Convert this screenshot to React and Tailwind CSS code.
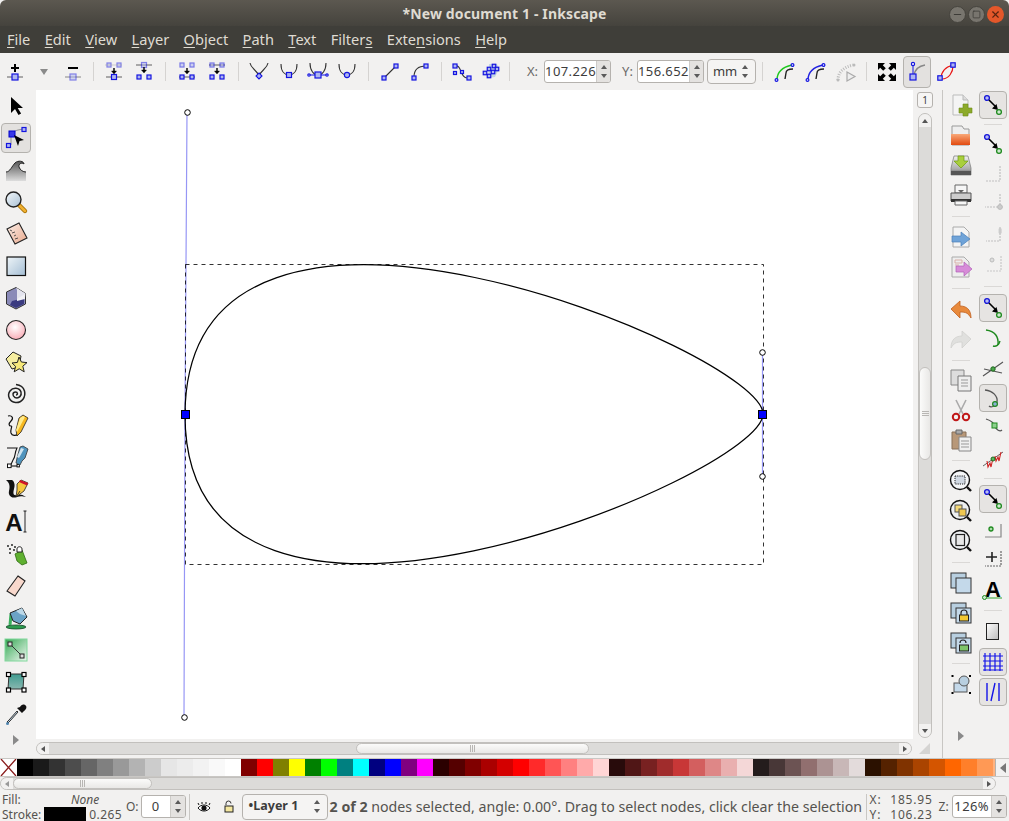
import { Minus, Square, X } from "lucide-react";

const UI_FONT = "font-['Noto_Sans','Open_Sans',sans-serif]";

const palette = [
  "#000000", "#1a1a1a", "#333333", "#4d4d4d", "#666666", "#808080", "#999999", "#b3b3b3", "#cccccc", "#e6e6e6", "#ececec", "#f2f2f2", "#f9f9f9", "#ffffff",
  "#800000", "#ff0000", "#808000", "#ffff00", "#008000", "#00ff00", "#008080", "#00ffff", "#000080", "#0000ff", "#800080", "#ff00ff",
  "#2b0000", "#550000", "#800000", "#aa0000", "#d40000", "#ff0000", "#ff2a2a", "#ff5555", "#ff8080", "#ffaaaa", "#ffd5d5",
  "#280b0b", "#501616", "#782121", "#a02c2c", "#c83737", "#d35f5f", "#de8787", "#e9afaf", "#f4d7d7",
  "#241c1c", "#483737", "#6c5353", "#916f6f", "#ac9393", "#c8b7b7", "#e3dbdb",
  "#2b1100", "#552200", "#803300", "#aa4400", "#d45500", "#ff6600", "#ff7f2a", "#ff9955", "#ffb380",
];

const menus = [
  ["F", "ile"], ["E", "dit"], ["V", "iew"], ["L", "ayer"], ["O", "bject"], ["P", "ath"], ["T", "ext"],
];

function Ico({ children, size = 24 }) {
  return (
    <svg width={size} height={size} viewBox="0 0 24 24" fill="none" className="block overflow-visible">
      {children}
    </svg>
  );
}

function Sq({ x, y, s = 5, o = 1 }) {
  return <rect x={x - s / 2} y={y - s / 2} width={s} height={s} fill="#aeb6f0" stroke="#1414e0" strokeWidth="1.2" opacity={o} />;
}

function Dot({ x, y, r = 2, c = "#1414e0", f = "#fff" }) {
  return <circle cx={x} cy={y} r={r} fill={f} stroke={c} strokeWidth="1.2" />;
}

function Arrow({ x, y }) {
  return (
    <g stroke="#000" strokeWidth="1.4" fill="#000">
      <path d={`M${x} ${y - 3}v3`} />
      <path d={`M${x - 2.5} ${y}h5l-2.5 3z`} strokeWidth="0.4" />
    </g>
  );
}

const topIcons = {
  add: (
    <Ico>
      <path d="M12 4v8M8 8h8" stroke="#000" strokeWidth="2" />
      <path d="M4 17h16" stroke="#777" strokeWidth="1.2" />
      <Sq x={12} y={17} s={6} />
    </Ico>
  ),
  remove: (
    <Ico>
      <path d="M7 8h10" stroke="#000" strokeWidth="2" />
      <path d="M4 17h16" stroke="#999" strokeWidth="1.2" />
      <Sq x={12} y={17} s={6} o={0.5} />
    </Ico>
  ),
  join: (
    <Ico>
      <Sq x={7} y={5} s={4} o={0.5} />
      <Sq x={17} y={5} s={4} o={0.5} />
      <path d="M3 5h17" stroke="#999" strokeWidth="0.8" opacity="0.5" />
      <Arrow x={12} y={11} />
      <path d="M4 17h16" stroke="#777" strokeWidth="1.2" />
      <Sq x={12} y={17} s={5} />
    </Ico>
  ),
  split: (
    <Ico>
      <path d="M4 5h16" stroke="#777" strokeWidth="1.2" />
      <Sq x={12} y={5} s={5} o={0.5} />
      <Arrow x={12} y={10} />
      <Sq x={7} y={17} s={4} />
      <Sq x={17} y={17} s={4} />
    </Ico>
  ),
  joinSeg: (
    <Ico>
      <Sq x={7} y={5} s={4} o={0.55} />
      <Sq x={17} y={5} s={4} o={0.55} />
      <Arrow x={12} y={11} />
      <path d="M4 17h16" stroke="#777" strokeWidth="1.2" />
      <Sq x={7} y={17} s={4} />
      <Sq x={17} y={17} s={4} />
    </Ico>
  ),
  delSeg: (
    <Ico>
      <path d="M4 5h16" stroke="#777" strokeWidth="1.2" />
      <Sq x={7} y={5} s={4} o={0.55} />
      <Sq x={17} y={5} s={4} o={0.55} />
      <Arrow x={12} y={11} />
      <Sq x={7} y={17} s={4} />
      <Sq x={17} y={17} s={4} />
    </Ico>
  ),
  cusp: (
    <Ico>
      <path d="M3 3C4 9 10 10 12 16C14 10 20 9 21 3" stroke="#333" strokeWidth="1.1" />
      <path d="M12 13l3 3l-3 3l-3-3z" fill="#aeb6f0" stroke="#1414e0" strokeWidth="1.1" />
    </Ico>
  ),
  smooth: (
    <Ico>
      <path d="M4 4C4 12 8 15 12 15C16 15 20 12 20 4" stroke="#333" strokeWidth="1.1" />
      <Sq x={12} y={15} s={5} />
    </Ico>
  ),
  symmetric: (
    <Ico>
      <path d="M4 3C4 11 8 15 12 15C16 15 20 11 20 3" stroke="#333" strokeWidth="1.1" />
      <path d="M3 15h18" stroke="#1414e0" strokeWidth="1" />
      <Sq x={12} y={15} s={6} />
      <Dot x={3} y={15} r={1.2} />
      <Dot x={21} y={15} r={1.2} />
    </Ico>
  ),
  auto: (
    <Ico>
      <path d="M4 4C4 12 8 15 12 15C16 15 20 12 20 4" stroke="#333" strokeWidth="1.1" />
      <circle cx="12" cy="15" r="2.6" fill="#aeb6f0" stroke="#1414e0" strokeWidth="1.1" />
    </Ico>
  ),
  toLine: (
    <Ico>
      <path d="M7 17L18 6" stroke="#333" strokeWidth="1.1" />
      <Sq x={6} y={18} s={4} />
      <Sq x={18} y={6} s={4} />
    </Ico>
  ),
  toCurve: (
    <Ico>
      <path d="M6 17C6 10 10 6 18 6" stroke="#333" strokeWidth="1.1" />
      <Sq x={6} y={18} s={4} />
      <Sq x={18} y={6} s={4} />
    </Ico>
  ),
  objToPath: (
    <Ico>
      <path d="M5 6C12 4 10 19 18 18" stroke="#333" strokeWidth="1.1" />
      <Sq x={5} y={6} s={4} />
      <Sq x={5} y={13} s={3} />
      <Sq x={12} y={12} s={3} />
      <Sq x={19} y={18} s={4} />
    </Ico>
  ),
  strokeToPath: (
    <Ico>
      <path d="M10 4h8l2 5l-4 8l-7 1z" fill="#c3d6e3" />
      <Sq x={10} y={9} s={3.5} />
      <Sq x={15} y={6} s={3.5} />
      <Sq x={18} y={9} s={3.5} />
      <Sq x={6} y={13} s={3.5} />
      <Sq x={10} y={16} s={3.5} />
      <Sq x={14} y={12} s={3.5} />
    </Ico>
  ),
  nextHandle: (
    <Ico>
      <path d="M4 20C4 12 10 7 19 5" stroke="#1ec81e" strokeWidth="1.4" />
      <path d="M13 13C13 10 16 9 20 9M13 13l-1 6" stroke="#222" strokeWidth="1.4" />
      <Dot x={3.5} y={20} r={1.4} />
      <Dot x={19.5} y={5} r={1.4} />
    </Ico>
  ),
  prevHandle: (
    <Ico>
      <path d="M4 20C4 12 10 7 19 5" stroke="#2222e0" strokeWidth="1.4" />
      <path d="M13 13C13 10 16 9 20 9M13 13l-1 6" stroke="#222" strokeWidth="1.4" />
      <Dot x={3.5} y={20} r={1.4} />
      <Dot x={19.5} y={5} r={1.4} />
    </Ico>
  ),
  lpe: (
    <Ico>
      <path d="M4 20C4 12 10 7 19 5" stroke="#bbb" strokeWidth="3" strokeDasharray="1 1.5" />
      <path d="M13 12v9l8-4.5z" fill="#eee" stroke="#aaa" strokeWidth="1.2" />
      <circle cx="4" cy="20" r="1.5" fill="#bbb" />
      <circle cx="20" cy="5" r="1.5" fill="#bbb" />
    </Ico>
  ),
  transform: (
    <Ico>
      <path d="M3 3h7l-2.2 2.2l3 3l-2.6 2.6l-3-3L3 10z" fill="#000" />
      <path d="M21 3v7l-2.2-2.2l-3 3l-2.6-2.6l3-3L14 3z" fill="#000" />
      <path d="M3 21v-7l2.2 2.2l3-3l2.6 2.6l-3 3L10 21z" fill="#000" />
      <path d="M21 21h-7l2.2-2.2l-3-3l2.6-2.6l3 3L21 14z" fill="#000" />
    </Ico>
  ),
  showHandles: (
    <Ico>
      <path d="M8 4v12" stroke="#1414e0" strokeWidth="1" />
      <path d="M9 15C10 10 14 6 20 5" stroke="#888" strokeWidth="1.4" />
      <Dot x={8} y={4} r={1.6} />
      <Sq x={8} y={17} s={6} />
    </Ico>
  ),
  outline: (
    <Ico>
      <path d="M6 19C6 12 10 7 18 5" stroke="#e81414" strokeWidth="1.2" />
      <path d="M7 19C14 19 18 12 18 6" stroke="#e81414" strokeWidth="1.2" />
      <Sq x={5} y={18} s={4.4} />
      <Sq x={18} y={5} s={4.4} />
    </Ico>
  ),
};

const leftIcons = {
  select: (
    <Ico>
      <path d="M7 3v16l4-4l3.5 6l2.6-1.5l-3.4-5.5h5.3z" fill="#000" />
    </Ico>
  ),
  node: (
    <Ico>
      <path d="M7 9v10M9 7C12 3 15 4 20 3" stroke="#999" strokeWidth="1.1" />
      <rect x="5" y="5" width="6" height="6" fill="#3838e8" stroke="#0000cc" />
      <Sq x={4.5} y={19.5} s={4} />
      <Sq x={20} y={3.5} s={4} />
      <path d="M10 9l10 5l-4.5 1l-1.5 5z" fill="#000" />
    </Ico>
  ),
  tweak: (
    <Ico>
      <defs>
        <linearGradient id="tw" x1="0" y1="0" x2="0" y2="1">
          <stop offset="0" stopColor="#555" />
          <stop offset="1" stopColor="#ddd" />
        </linearGradient>
      </defs>
      <path d="M2 14C6 14 8 8 11 5C14 2 20 3 20 6C18 4 14 6 15 9C16 12 19 14 22 14V23H2z" fill="url(#tw)" />
      <path d="M2 14C6 14 8 8 11 5C14 2 20 3 20 6C18 4 14 6 15 9C16 12 19 14 22 14" stroke="#222" strokeWidth="1" />
    </Ico>
  ),
  zoom: (
    <Ico>
      <defs>
        <linearGradient id="zm" x1="0" y1="0" x2="1" y2="1">
          <stop offset="0" stopColor="#f3f8fb" />
          <stop offset="1" stopColor="#a9c0d4" />
        </linearGradient>
      </defs>
      <path d="M15 15l6 6" stroke="#a06a00" strokeWidth="4.4" strokeLinecap="round" />
      <path d="M15 15l6 6" stroke="#f0b030" strokeWidth="2.8" strokeLinecap="round" />
      <circle cx="9.5" cy="9.5" r="7.5" fill="url(#zm)" stroke="#222" strokeWidth="1.4" />
    </Ico>
  ),
  measure: (
    <Ico>
      <defs>
        <linearGradient id="ms" x1="0" y1="0" x2="1" y2="1">
          <stop offset="0" stopColor="#fbeee8" />
          <stop offset="1" stopColor="#eaa98c" />
        </linearGradient>
      </defs>
      <path d="M3 7L15 1L23 16L11 22z" fill="url(#ms)" stroke="#222" strokeWidth="1.1" />
      <path d="M6 8l2 1M8 11l3-1M10 14l2-1M11 17l3-1" stroke="#333" strokeWidth="0.8" />
    </Ico>
  ),
  rect: (
    <Ico>
      <defs>
        <linearGradient id="rc" x1="0" y1="0" x2="1" y2="1">
          <stop offset="0" stopColor="#eef4f8" />
          <stop offset="1" stopColor="#a4bed4" />
        </linearGradient>
      </defs>
      <rect x="3" y="3" width="18.5" height="18.5" fill="url(#rc)" stroke="#111" strokeWidth="1.2" />
    </Ico>
  ),
  box: (
    <Ico>
      <path d="M12 1.5L21.5 7.5V18L12 23L2.5 18V6z" fill="#8a8ab8" stroke="#333" strokeWidth="1" />
      <path d="M12 1.5L21.5 7.5L21 12L13 13V4z" fill="#e4e4ee" />
      <path d="M8 15L20 12V18L12 22L6 19z" fill="#3b3b80" />
      <path d="M13 13L21 8V13L13 15z" fill="#f1f1f5" />
    </Ico>
  ),
  circle: (
    <Ico>
      <defs>
        <radialGradient id="cr" cx="0.45" cy="0.35" r="0.7">
          <stop offset="0" stopColor="#fff" />
          <stop offset="1" stopColor="#f9a8b3" />
        </radialGradient>
      </defs>
      <circle cx="12" cy="12" r="9.5" fill="url(#cr)" stroke="#222" strokeWidth="1.1" />
    </Ico>
  ),
  star: (
    <Ico>
      <path d="M2 9L9 2l8 4l-2 11l-7 2z" fill="#f5eda0" stroke="#222" strokeWidth="1" />
      <path d="M15 7l2.4 5l5.6.6l-4.2 3.6l1.4 5.6l-5-3l-5 3l1.4-5.4L8 13l5.4-.6z" fill="#f6e87a" stroke="#222" strokeWidth="1" />
    </Ico>
  ),
  spiral: (
    <Ico>
      <path d="M12 13C14 13 14 10 11.5 10C8.5 10 8 14 11 15.5C15 17 18 13.5 17 10C15.5 5.5 9 5 6 9C3 13 5 20 11.5 20.5C18 21 22 15 20.5 9C19.5 5.5 16.5 3 12 2.5" stroke="#222" strokeWidth="1.5" />
    </Ico>
  ),
  pencil: (
    <Ico>
      <path d="M4 2c4-1 6 2 3 5c-3 3-2 5 0 5c2 0-1 3 0 7c1 3 5 3 7 1" stroke="#111" strokeWidth="1.2" />
      <path d="M15 4l4-3l5 3l-7 14l-4 4l-1-6z" fill="#f7b820" stroke="#222" strokeWidth="0.8" />
      <path d="M16 4l3-2l2 1l-8 15l-1-2z" fill="#ffeb8a" />
    </Ico>
  ),
  pen: (
    <Ico>
      <path d="M3 2h10c-3 6-1 8-4 12c-1 2-2 5-3 6" stroke="#111" strokeWidth="1.1" />
      <path d="M6 20h9" stroke="#111" strokeWidth="1.1" />
      <rect x="3.5" y="18" width="3.6" height="3.6" fill="#fff" stroke="#111" />
      <rect x="13" y="18.5" width="2.4" height="2.4" fill="#fff" stroke="#111" />
      <path d="M16 1l3-1l5 3l-3 9l-3 3l-2 4l-4-2l1-5z" fill="#4f93bd" stroke="#333" strokeWidth="0.8" />
      <path d="M17 2l3 1l-5 9l-2-1z" fill="#cfe3ef" />
    </Ico>
  ),
  calligraphy: (
    <Ico>
      <path d="M2 2c4 3 4 7 3 11c-1 4 2 8 8 6c3-1 5-1 9 0c-4-3-7-3-9-2c-4 1-4-2-3-6c1-3 1-7-2-9z" fill="#111" />
      <path d="M13 6l4-4l7 3l-4 8l-8 6l1-7z" fill="#f6c640" stroke="#222" strokeWidth="0.8" />
      <path d="M16 2l8 3l-1 2.5l-8-3.5z" fill="#d0122a" />
      <path d="M12 19l4-6" stroke="#222" strokeWidth="0.9" />
    </Ico>
  ),
  spray: (
    <Ico>
      <circle cx="4" cy="4" r="0.9" fill="#111" />
      <circle cx="8" cy="3" r="0.9" fill="#111" />
      <circle cx="11" cy="5" r="0.9" fill="#111" />
      <circle cx="6" cy="7" r="0.9" fill="#111" />
      <circle cx="10" cy="8" r="0.9" fill="#111" />
      <circle cx="6" cy="11" r="0.9" fill="#111" />
      <path d="M11 12l7-4l5 13l-5 2l-5-4z" fill="#5fb030" stroke="#2c6a10" strokeWidth="0.8" />
      <path d="M13 7c0-3 5-3 5 0v3h-5z" fill="#fff" stroke="#222" />
    </Ico>
  ),
  eraser: (
    <Ico>
      <path d="M14 2l7 5L11 22l-8-5z" fill="#f8d8cc" stroke="#222" strokeWidth="1.1" />
    </Ico>
  ),
  bucket: (
    <Ico>
      <ellipse cx="12" cy="21" rx="10" ry="2" fill="#2c9c4e" stroke="#14462a" strokeWidth="0.8" />
      <path d="M7 8l-1 11" stroke="#3bb05e" strokeWidth="3" />
      <path d="M6 7l12-5l5 9l-7 7l-7-3z" fill="#6ba3c6" stroke="#222" strokeWidth="1" />
      <path d="M12 5l6-3l4 8l-6-2z" fill="#bcd8e8" />
    </Ico>
  ),
  gradient: (
    <Ico>
      <defs>
        <linearGradient id="gd" x1="0" y1="0" x2="1" y2="1">
          <stop offset="0" stopColor="#35a854" />
          <stop offset="1" stopColor="#eff8f1" />
        </linearGradient>
      </defs>
      <rect x="1" y="1" width="22" height="22" fill="url(#gd)" stroke="#7fd79a" />
      <path d="M6 6l12 12" stroke="#333" strokeWidth="1" />
      <rect x="4" y="4" width="4" height="4" fill="#ddd" stroke="#222" />
      <rect x="16" y="16" width="4" height="4" fill="#ddd" stroke="#222" />
    </Ico>
  ),
  mesh: (
    <Ico>
      <defs>
        <linearGradient id="mh" x1="0" y1="0" x2="0" y2="1">
          <stop offset="0" stopColor="#3f9b8f" />
          <stop offset="1" stopColor="#88b7b0" />
        </linearGradient>
      </defs>
      <path d="M5 4l15 0l-1 15H4z" fill="url(#mh)" stroke="#333" />
      <rect x="2.5" y="2.5" width="4" height="4" fill="#fff" stroke="#000" strokeWidth="1.2" />
      <rect x="18" y="2.5" width="4" height="4" fill="#fff" stroke="#000" strokeWidth="1.2" />
      <rect x="2.5" y="18" width="4" height="4" fill="#fff" stroke="#000" strokeWidth="1.2" />
      <rect x="18" y="18" width="4" height="4" fill="#fff" stroke="#000" strokeWidth="1.2" />
    </Ico>
  ),
  dropper: (
    <Ico>
      <path d="M14 10l-8 9l-2 2l-1-1l2-2l8-9z" fill="#bcd4e6" stroke="#333" />
      <path d="M13 6l5 5l2-2c3-2 3-5 1-6s-4 0-5 2z" fill="#111" />
      <circle cx="3.5" cy="21.5" r="1.5" fill="#4f86b0" />
    </Ico>
  ),
};

const cmdIcons = {
  newDoc: (
    <Ico>
      <path d="M4 2h10l5 5v15H4z" fill="#f4f4f4" stroke="#bbb" />
      <path d="M14 2v5h5" fill="#ddd" stroke="#bbb" />
      <path d="M14 11h5v4h4v5h-4v3h-5v-3h-4v-5h4z" fill="#8caa2a" stroke="#6c8a1a" strokeWidth="0.6" />
    </Ico>
  ),
  open: (
    <Ico>
      <defs>
        <linearGradient id="op" x1="0" y1="0" x2="0" y2="1">
          <stop offset="0" stopColor="#f8a878" />
          <stop offset="1" stopColor="#e24a10" />
        </linearGradient>
      </defs>
      <path d="M3 3h10l2 3h5v16H3z" fill="#eee" stroke="#999" />
      <path d="M2 11h19v11H2z" fill="url(#op)" />
    </Ico>
  ),
  save: (
    <Ico>
      <defs>
        <linearGradient id="sv" x1="0" y1="0" x2="0" y2="1">
          <stop offset="0" stopColor="#f2f2f2" />
          <stop offset="0.7" stopColor="#aaa" />
          <stop offset="1" stopColor="#444" />
        </linearGradient>
      </defs>
      <path d="M5 3h14l3 12v7H2v-7z" fill="url(#sv)" stroke="#777" strokeWidth="0.7" />
      <path d="M2 18h20v4H2z" fill="#555" />
      <path d="M9 3h6v5h4l-7 7l-7-7h4z" fill="#a9cf3c" stroke="#6f9a12" strokeWidth="0.7" />
    </Ico>
  ),
  print: (
    <Ico>
      <path d="M6 2h12v8H6z" fill="#f6f6f6" stroke="#666" />
      <path d="M2 10h20v8H2z" fill="#ccc" stroke="#555" />
      <path d="M2 16h20v3H2z" fill="#333" />
      <path d="M6 18h12v4H6z" fill="#f6f6f6" stroke="#666" />
      <path d="M9 7h6l-3 3z" fill="#666" />
    </Ico>
  ),
  importDoc: (
    <Ico>
      <path d="M4 2h11l5 5v15H4z" fill="#f4f4f4" stroke="#aaa" />
      <path d="M3 11h9V7l9 7l-9 7v-4H3z" fill="#6fa3d8" stroke="#4a80b8" strokeWidth="0.7" />
    </Ico>
  ),
  exportDoc: (
    <Ico>
      <path d="M3 2h12l5 5v15H3z" fill="#eeeeee" stroke="#aaa" />
      <path d="M6 5h7v3H6zM6 10h4" stroke="#d8b0a8" strokeWidth="1" />
      <path d="M7 11h8V7l8 7l-8 7v-4H7z" fill="#d78cd8" stroke="#b060b8" strokeWidth="0.7" />
    </Ico>
  ),
  undo: (
    <Ico>
      <path d="M2 11L11 3v5c6 0 11 3 11 12c-3-5-5-6-11-6v6z" fill="#e88a3c" stroke="#c06020" strokeWidth="0.8" />
    </Ico>
  ),
  redo: (
    <Ico>
      <path d="M22 11L13 3v5c-6 0-11 3-11 12c3-5 5-6 11-6v6z" fill="#e0e0de" stroke="#d0d0ce" strokeWidth="0.8" />
    </Ico>
  ),
  copy: (
    <Ico>
      <path d="M2 2h13v15H2z" fill="#ddd" stroke="#888" />
      <path d="M9 8h13v15H9z" fill="#eee" stroke="#777" />
      <path d="M12 12h7M12 15h7M12 18h7" stroke="#999" />
    </Ico>
  ),
  cut: (
    <Ico>
      <path d="M7 2l7 14M17 2l-7 14" stroke="#aaa" strokeWidth="1.6" />
      <circle cx="7" cy="19" r="3.2" stroke="#c01818" strokeWidth="2" />
      <circle cx="17" cy="19" r="3.2" stroke="#c01818" strokeWidth="2" />
    </Ico>
  ),
  paste: (
    <Ico>
      <path d="M3 4h14v17H3z" fill="#b89878" stroke="#887058" />
      <path d="M7 2h6v4H7z" fill="#aaa" stroke="#666" />
      <path d="M10 9h12v14H10z" fill="#f0f0f0" stroke="#888" />
      <path d="M12 13h8M12 16h8M12 19h8" stroke="#999" />
    </Ico>
  ),
  zoomSel: (
    <Ico>
      <circle cx="11" cy="11" r="9.5" fill="#f4f6f8" stroke="#111" strokeWidth="1.4" />
      <rect x="6" y="7" width="10" height="8" fill="#d0d8e2" stroke="#222" strokeDasharray="1.2 1" />
      <path d="M18 18l4 4" stroke="#111" strokeWidth="2.4" />
    </Ico>
  ),
  zoomDraw: (
    <Ico>
      <circle cx="11" cy="11" r="9.5" fill="#eef0f0" stroke="#111" strokeWidth="1.4" />
      <rect x="6" y="6" width="7" height="7" fill="#f3d878" stroke="#555" />
      <rect x="10" y="10" width="7" height="7" fill="#f0c850" stroke="#555" />
      <path d="M18 18l4 4" stroke="#111" strokeWidth="2.4" />
    </Ico>
  ),
  zoomPage: (
    <Ico>
      <circle cx="11" cy="11" r="9.5" fill="#eef0f2" stroke="#111" strokeWidth="1.4" />
      <rect x="7" y="5.5" width="8.5" height="11" fill="#e8e8e8" stroke="#222" strokeWidth="1.2" />
      <path d="M18 18l4 4" stroke="#111" strokeWidth="2.4" />
    </Ico>
  ),
  dup: (
    <Ico>
      <rect x="2" y="2" width="15" height="15" fill="#b8cfe0" stroke="#333" />
      <rect x="7" y="7" width="15" height="15" fill="#c4d9ea" stroke="#333" />
    </Ico>
  ),
  clone: (
    <Ico>
      <rect x="2" y="2" width="15" height="15" fill="#b8cfe0" stroke="#333" />
      <rect x="7" y="7" width="15" height="15" fill="#c4d9ea" stroke="#333" />
      <path d="M12 14v-2a3 3 0 0 1 6 0v2" stroke="#222" strokeWidth="1.2" />
      <rect x="10.5" y="14" width="9" height="6" fill="#f2c832" stroke="#222" />
    </Ico>
  ),
  unlink: (
    <Ico>
      <rect x="2" y="2" width="15" height="15" fill="#b8cfe0" stroke="#333" />
      <rect x="7" y="7" width="15" height="15" fill="#c4d9ea" stroke="#333" />
      <path d="M11 12a3 3 0 0 1 6 0" stroke="#222" strokeWidth="1.2" />
      <rect x="10.5" y="14" width="9" height="6" fill="#7ec46a" stroke="#222" />
    </Ico>
  ),
  group: (
    <Ico>
      <rect x="5" y="11" width="13" height="9" fill="#c4d9ea" stroke="#555" />
      <circle cx="15" cy="9" r="5" fill="#b8cfe0" stroke="#555" />
      <rect x="2.5" y="3" width="2" height="2" fill="#000" />
      <rect x="20" y="3" width="2" height="2" fill="#000" />
      <rect x="2.5" y="20" width="2" height="2" fill="#000" />
      <rect x="20" y="20" width="2" height="2" fill="#000" />
    </Ico>
  ),
};

function SnapNode({ c = "#1f8a1f" }) {
  return <circle cx="18" cy="19" r="2.4" fill="#cfe8cf" stroke={c} strokeWidth="1.3" />;
}

const snapIcons = {
  global: (
    <Ico>
      <circle cx="6" cy="5" r="2.4" fill="#b8bcf2" stroke="#1414d8" strokeWidth="1.3" />
      <path d="M8 7l7 7" stroke="#000" strokeWidth="1.6" />
      <path d="M17 17l-6-1.5l4.5-4.5z" fill="#000" />
      <SnapNode />
    </Ico>
  ),
  bboxOn: (
    <Ico>
      <path d="M19 4v15H5" stroke="#c0c0c0" strokeWidth="1.2" strokeDasharray="2 1" />
    </Ico>
  ),
  bboxEdge: (
    <Ico>
      <path d="M19 2v13H4" stroke="#c0c0c0" strokeWidth="1.2" strokeDasharray="2 1" />
      <circle cx="19" cy="15" r="2.4" fill="#ccc" stroke="#bbb" />
    </Ico>
  ),
  bboxCorner: (
    <Ico>
      <path d="M19 5v14H5" stroke="#c0c0c0" strokeWidth="1.2" strokeDasharray="2 1" />
      <rect x="17.6" y="6" width="3" height="6" rx="1.4" fill="#ccc" />
    </Ico>
  ),
  bboxMid: (
    <Ico>
      <path d="M20 4v15H6" stroke="#c8c8c8" strokeWidth="1.2" strokeDasharray="2 1" />
      <circle cx="11" cy="8" r="2" fill="#ddd" stroke="#bbb" />
    </Ico>
  ),
  path: (
    <Ico>
      <path d="M5 4C12 5 18 9 17 19" stroke="#1f8a1f" strokeWidth="1.4" />
      <path d="M12 20c3 1 6-1 7-5" stroke="#1f8a1f" strokeWidth="1.4" />
    </Ico>
  ),
  cross: (
    <Ico>
      <path d="M2 20L22 6M3 13L21 17" stroke="#555" strokeWidth="1.1" />
      <circle cx="12" cy="13" r="2.2" fill="#4ca84c" stroke="#1f6a1f" />
    </Ico>
  ),
  smooth: (
    <Ico>
      <path d="M4 4C12 5 17 10 16 16C15 20 10 22 8 20" stroke="#555" strokeWidth="1.3" />
      <circle cx="14" cy="18" r="2.4" fill="#8ab0d8" stroke="#1f8a1f" strokeWidth="1.2" />
    </Ico>
  ),
  cusp: (
    <Ico>
      <path d="M5 3c3 1 8 3 9 7M14 10c1 4 5 6 7 4" stroke="#555" strokeWidth="1.2" />
      <rect x="11" y="7" width="5" height="5" fill="#8fd08f" stroke="#1f8a1f" />
    </Ico>
  ),
  midpoint: (
    <Ico>
      <path d="M2 20L22 6" stroke="#666" strokeWidth="1" />
      <path d="M6 15l1 6l2-4l1 4l2-9M14 10l1 5l2-4l1 4l2-9" stroke="#d02020" strokeWidth="1.1" />
      <circle cx="12" cy="13" r="2" fill="#5cb85c" stroke="#1f6a1f" />
    </Ico>
  ),
  corner: (
    <Ico>
      <path d="M20 7v13H4" stroke="#888" strokeWidth="1.2" />
      <circle cx="10" cy="12" r="2" fill="#a8dca8" stroke="#1f8a1f" strokeWidth="1.3" />
    </Ico>
  ),
  plus: (
    <Ico>
      <path d="M5 10h11M11 5v10" stroke="#222" strokeWidth="1.6" />
      <path d="M20 4v15H4" stroke="#666" strokeWidth="1.2" strokeDasharray="2 1" />
    </Ico>
  ),
  text: (
    <Ico>
      <text x="12" y="20" textAnchor="middle" fontFamily="Liberation Sans" fontWeight="700" fontSize="22" fill="#000">A</text>
      <path d="M3 21h18" stroke="#2ca02c" strokeWidth="1" />
      <circle cx="3.5" cy="20.5" r="2" fill="#cfe8cf" stroke="#1f8a1f" />
    </Ico>
  ),
  page: (
    <Ico>
      <defs>
        <linearGradient id="pg" x1="0" y1="0" x2="1" y2="1">
          <stop offset="0" stopColor="#fff" />
          <stop offset="1" stopColor="#bbb" />
        </linearGradient>
      </defs>
      <rect x="5.5" y="3.5" width="12" height="16" fill="url(#pg)" stroke="#222" />
    </Ico>
  ),
  grid: (
    <Ico>
      <path d="M4 3v18M9 3v18M14 3v18M19 3v18M2 6h20M2 11h20M2 16h20M2 20h20" stroke="#1414e8" strokeWidth="1.2" />
    </Ico>
  ),
  guide: (
    <Ico>
      <path d="M6 3v18M18 3v18M10 21L14 3" stroke="#1414e8" strokeWidth="1.4" />
    </Ico>
  ),
};

function TopBtn({ children, className = "w-[30px]" }) {
  return <div className={`flex h-full shrink-0 items-center justify-center ${className}`}>{children}</div>;
}

function TopSep({ className = "w-[11px]" }) {
  return (
    <div className={`flex h-full shrink-0 items-center justify-center ${className}`}>
      <div className="h-[19px] w-px bg-[#d5d3d1]" />
    </div>
  );
}

function Spin({ up = true }) {
  return (
    <div className="flex w-[14px] flex-col items-center justify-center gap-[5px]">
      <div className="h-0 w-0 border-x-[3.5px] border-b-[4px] border-x-transparent border-b-[#5a5a5a]" />
      <div className={`h-0 w-0 border-x-[3.5px] border-t-[4px] border-x-transparent ${up ? "border-t-[#5a5a5a]" : "border-t-[#888]"}`} />
    </div>
  );
}

function NumInput({ value, className = "" }) {
  return (
    <div className={`flex h-[23px] shrink-0 overflow-hidden rounded-[3px] border border-[#b5b2ae] bg-white ${className}`}>
      <div className="flex flex-1 items-center justify-center text-[13px] tracking-[0.4px] text-[#3c3c3c]">{value}</div>
      <div className="flex border-l border-[#cdcbc8] bg-[#e4e2e0]">
        <Spin />
      </div>
    </div>
  );
}

function ToolBtn({ icon, active }) {
  if (active) {
    return (
      <div className="flex h-[32px] w-full items-center justify-center">
        <div className="flex h-[30px] w-[30px] items-center justify-center rounded-[4px] border border-[#b4b2ae] bg-[#e3e1df]">{icon}</div>
      </div>
    );
  }
  return <div className="flex h-[32px] w-full items-center justify-center">{icon}</div>;
}

function ColBtn({ icon, active }) {
  if (active) {
    return (
      <div className="flex h-[30px] w-full shrink-0 items-center justify-center">
        <div className="flex h-[28px] w-[28px] items-center justify-center rounded-[4px] border border-[#b4b2ae] bg-[#e6e4e2]">{icon}</div>
      </div>
    );
  }
  return <div className="flex h-[30px] w-full shrink-0 items-center justify-center">{icon}</div>;
}

function ColSep({ className = "h-[12px]" }) {
  return (
    <div className={`flex w-full shrink-0 items-center justify-center ${className}`}>
      <div className="h-px w-[18px] bg-[#dad8d6]" />
    </div>
  );
}

function Grip({ vertical }) {
  const bar = vertical ? "h-px w-[7px] bg-[#b8b6b3]" : "h-[7px] w-px bg-[#b8b6b3]";
  return (
    <div className={`flex gap-[1px] ${vertical ? "flex-col" : "flex-row"}`}>
      <div className={bar} />
      <div className={bar} />
      <div className={bar} />
    </div>
  );
}

function Canvas() {
  return (
    <svg viewBox="36 90 877 649" className="block h-full w-full bg-white">
      <path d="M185 414L187 112M185 414L184 717M762.5 414V352M762.5 414V476" stroke="#9696f5" strokeWidth="1.2" />
      <rect x="185.5" y="264.5" width="578" height="300" fill="none" stroke="#000" strokeWidth="1" strokeDasharray="4 4" opacity="0.8" />
      <path d="M185 414C187 112 763 352 763 414C763 476 184 717 185 414Z" fill="none" stroke="#000" strokeWidth="1.25" />
      <rect x="181.5" y="410.5" width="8" height="8" fill="#0000ff" stroke="#000" />
      <rect x="758.5" y="410.5" width="8" height="8" fill="#0000ff" stroke="#000" />
      <circle cx="187.5" cy="112.5" r="2.8" fill="#fff" stroke="#000" />
      <circle cx="184.5" cy="717.5" r="2.8" fill="#fff" stroke="#000" />
      <circle cx="762.5" cy="352.5" r="2.8" fill="#fff" stroke="#000" />
      <circle cx="762.5" cy="476.5" r="2.8" fill="#fff" stroke="#000" />
    </svg>
  );
}

export default function App() {
  return (
    <div className={`flex h-[821px] w-[1009px] flex-col overflow-hidden bg-[#f2f1f0] text-[#3c3c3c] ${UI_FONT}`}>
      {/* title bar */}
      <header className="relative flex h-[26px] shrink-0 items-center justify-center rounded-t-[6px] bg-gradient-to-b from-[#5c5850] to-[#45433d]">
        <span className="text-[14px] font-bold tracking-[0.15px] text-[#dfdbd2]">*New document 1 - Inkscape</span>
        <div className="absolute right-[5px] top-[6px] flex gap-[2px]">
          <div className="flex h-[17px] w-[17px] items-center justify-center rounded-full border border-[#45433d] bg-[#78756e]">
            <Minus size={11} strokeWidth={2.5} className="text-[#3c3b37]" />
          </div>
          <div className="flex h-[17px] w-[17px] items-center justify-center rounded-full border border-[#45433d] bg-[#78756e]">
            <Square size={9} strokeWidth={2} className="text-[#3c3b37]" />
          </div>
          <div className="flex h-[17px] w-[17px] items-center justify-center rounded-full bg-[#e4572a]">
            <X size={11} strokeWidth={2.5} className="text-[#5a2410]" />
          </div>
        </div>
      </header>

      {/* menu bar */}
      <nav className="flex h-[27px] shrink-0 items-center gap-[14.4px] bg-[#3f3e39] pl-[7px] text-[14.6px] text-[#dfdbd2]">
        {menus.map(([key, rest]) => (
          <span key={key}>
            <span className="underline underline-offset-2">{key}</span>
            {rest}
          </span>
        ))}
        <span>
          Filter<span className="underline underline-offset-2">s</span>
        </span>
        <span>
          Exte<span className="underline underline-offset-2">n</span>sions
        </span>
        <span>
          <span className="underline underline-offset-2">H</span>elp
        </span>
      </nav>

      {/* commands bar */}
      <div className="flex h-[37px] shrink-0 items-center">
        <TopBtn>{topIcons.add}</TopBtn>
        <TopBtn className="w-[28px]">
          <div className="h-0 w-0 border-x-[4px] border-t-[6px] border-x-transparent border-t-[#8a8a8a]" />
        </TopBtn>
        <TopBtn>{topIcons.remove}</TopBtn>
        <TopSep className="w-[11px]" />
        <TopBtn>{topIcons.join}</TopBtn>
        <TopBtn>{topIcons.split}</TopBtn>
        <TopSep className="w-[13px]" />
        <TopBtn>{topIcons.joinSeg}</TopBtn>
        <TopBtn>{topIcons.delSeg}</TopBtn>
        <TopSep className="w-[12px]" />
        <TopBtn>{topIcons.cusp}</TopBtn>
        <TopBtn className="w-[29px]">{topIcons.smooth}</TopBtn>
        <TopBtn className="w-[29px]">{topIcons.symmetric}</TopBtn>
        <TopBtn>{topIcons.auto}</TopBtn>
        <TopSep className="w-[13px]" />
        <TopBtn>{topIcons.toLine}</TopBtn>
        <TopBtn>{topIcons.toCurve}</TopBtn>
        <TopSep className="w-[12px]" />
        <TopBtn className="w-[29px]">{topIcons.objToPath}</TopBtn>
        <TopBtn>{topIcons.strokeToPath}</TopBtn>
        <TopSep className="w-[6px]" />
        <span className="ml-[15px] mr-[6px] text-[13px] text-[#6a6a68]">X:</span>
        <NumInput value="107.226" className="w-[67px]" />
        <span className="ml-[11px] mr-[4px] text-[13px] text-[#6a6a68]">Y:</span>
        <NumInput value="156.652" className="w-[67px]" />
        <div className="ml-[3px] flex h-[25px] w-[49px] shrink-0 items-center justify-between rounded-[4px] border border-[#b5b2ae] bg-[#f5f4f3] pl-[5px] pr-[3px] text-[13px]">
          mm
          <Spin />
        </div>
        <TopSep className="w-[14px]" />
        <TopBtn className="w-[31px]">{topIcons.nextHandle}</TopBtn>
        <TopBtn>{topIcons.prevHandle}</TopBtn>
        <TopBtn>{topIcons.lpe}</TopBtn>
        <TopSep className="w-[11px]" />
        <TopBtn>{topIcons.transform}</TopBtn>
        <TopBtn>
          <div className="flex h-[32px] w-[28px] items-center justify-center rounded-[4px] border border-[#b4b2ae] bg-[#e3e1df]">{topIcons.showHandles}</div>
        </TopBtn>
        <TopBtn>{topIcons.outline}</TopBtn>
      </div>

      {/* work area */}
      <div className="flex min-h-0 flex-1">
        <aside className="flex w-[36px] shrink-0 flex-col items-center">
          <div className="w-[32px] self-start">
            <ToolBtn icon={leftIcons.select} />
            <ToolBtn icon={leftIcons.node} active />
            <ToolBtn icon={leftIcons.tweak} />
            <ToolBtn icon={leftIcons.zoom} />
            <ToolBtn icon={leftIcons.measure} />
            <ToolBtn icon={leftIcons.rect} />
            <ToolBtn icon={leftIcons.box} />
            <ToolBtn icon={leftIcons.circle} />
            <ToolBtn icon={leftIcons.star} />
            <ToolBtn icon={leftIcons.spiral} />
            <ToolBtn icon={leftIcons.pencil} />
            <ToolBtn icon={leftIcons.pen} />
            <ToolBtn icon={leftIcons.calligraphy} />
            <ToolBtn
              icon={
                <Ico>
                  <text x="10" y="21" textAnchor="middle" fontFamily="Liberation Sans" fontWeight="700" fontSize="24" fill="#111">A</text>
                  <path d="M21 1v21M19.5 1h3M19.5 22h3" stroke="#111" strokeWidth="0.9" />
                </Ico>
              }
            />
            <ToolBtn icon={leftIcons.spray} />
            <ToolBtn icon={leftIcons.eraser} />
            <ToolBtn icon={leftIcons.bucket} />
            <ToolBtn icon={leftIcons.gradient} />
            <ToolBtn icon={leftIcons.mesh} />
            <ToolBtn icon={leftIcons.dropper} />
            <div className="mt-[5px] flex justify-center">
              <div className="h-0 w-0 border-y-[5px] border-l-[6px] border-y-transparent border-l-[#8a8a8a]" />
            </div>
          </div>
        </aside>

        <div className="flex min-w-0 flex-1 flex-col">
          <div className="flex min-h-0 flex-1">
            <div className="flex min-w-0 flex-1 flex-col">
              <main className="min-h-0 flex-1">
                <Canvas />
              </main>
              <div className="flex h-[19px] shrink-0 items-center pr-[1px]">
                {/* horizontal scrollbar */}
                <div className="flex h-[13px] flex-1 items-center rounded-[7px] border border-[#c2c0bd] bg-[#dcdbd9]">
                  <div className="flex h-full w-[12px] items-center justify-center bg-[#f2f1f0] rounded-l-[7px]">
                    <div className="h-0 w-0 border-y-[3.5px] border-r-[4px] border-y-transparent border-r-[#555]" />
                  </div>
                  <div className="ml-[307px] flex h-full w-[233px] items-center justify-center rounded-[7px] border border-[#c2c0bd] bg-gradient-to-b from-[#fbfbfa] to-[#e9e8e6]">
                    <Grip />
                  </div>
                  <div className="flex-1" />
                  <div className="flex h-full w-[12px] items-center justify-center rounded-r-[7px] bg-[#f2f1f0]">
                    <div className="h-0 w-0 border-y-[3.5px] border-l-[4px] border-y-transparent border-l-[#555]" />
                  </div>
                </div>
              </div>
            </div>

            {/* vertical scrollbar */}
            <div className="flex w-[30px] shrink-0 flex-col items-start border-r border-[#c8c6c3] pl-[5px]">
              <div className="-ml-[1px] mt-[2px] flex h-[16px] w-[16px] items-center justify-center rounded-[3px] border border-[#b5b2ae] bg-[#f6f5f4] text-[10px] leading-none">1</div>
              <div className="mt-[5px] flex h-[625px] w-[14px] flex-col items-center rounded-[7px] border border-[#c2c0bd] bg-[#dcdbd9]">
                <div className="flex h-[13px] w-full items-center justify-center rounded-t-[7px] bg-[#f2f1f0]">
                  <div className="h-0 w-0 border-x-[3.5px] border-b-[4px] border-x-transparent border-b-[#555]" />
                </div>
                <div className="mt-[240px] flex h-[93px] w-full items-center justify-center rounded-[7px] border border-[#c2c0bd] bg-gradient-to-r from-[#fbfbfa] to-[#e9e8e6]">
                  <Grip vertical />
                </div>
                <div className="flex-1" />
                <div className="flex h-[13px] w-full items-center justify-center rounded-b-[7px] bg-[#f2f1f0]">
                  <div className="h-0 w-0 border-x-[3.5px] border-t-[4px] border-x-transparent border-t-[#555]" />
                </div>
              </div>
              <div className="ml-[1px] mt-[5px] h-0 w-0 border-b-[11px] border-l-[11px] border-b-[#d5d4d2] border-l-transparent" />
            </div>

            {/* commands column */}
            <div className="flex w-[36px] shrink-0 flex-col items-center">
              <ColBtn icon={cmdIcons.newDoc} />
              <ColBtn icon={cmdIcons.open} />
              <ColBtn icon={cmdIcons.save} />
              <ColBtn icon={cmdIcons.print} />
              <ColSep />
              <ColBtn icon={cmdIcons.importDoc} />
              <ColBtn icon={cmdIcons.exportDoc} />
              <ColSep className="h-[13px]" />
              <ColBtn icon={cmdIcons.undo} />
              <ColBtn icon={cmdIcons.redo} />
              <ColSep className="h-[10px]" />
              <ColBtn icon={cmdIcons.copy} />
              <ColBtn icon={cmdIcons.cut} />
              <ColBtn icon={cmdIcons.paste} />
              <ColSep className="h-[11px]" />
              <ColBtn icon={cmdIcons.zoomSel} />
              <ColBtn icon={cmdIcons.zoomDraw} />
              <ColBtn icon={cmdIcons.zoomPage} />
              <ColSep className="h-[12px]" />
              <ColBtn icon={cmdIcons.dup} />
              <ColBtn icon={cmdIcons.clone} />
              <ColBtn icon={cmdIcons.unlink} />
              <ColSep className="h-[11px]" />
              <ColBtn icon={cmdIcons.group} />
              <div className="mt-[32px] h-0 w-0 border-y-[5px] border-l-[6px] border-y-transparent border-l-[#8a8a8a]" />
            </div>

            {/* snap column */}
            <div className="flex w-[30px] shrink-0 flex-col items-center pr-[2px]">
              <ColBtn icon={snapIcons.global} active />
              <ColSep className="h-[9px]" />
              <ColBtn icon={snapIcons.global} />
              <ColBtn icon={snapIcons.bboxOn} />
              <ColBtn icon={snapIcons.bboxEdge} />
              <ColBtn icon={snapIcons.bboxCorner} />
              <ColBtn icon={snapIcons.bboxMid} />
              <ColSep className="h-[14px]" />
              <ColBtn icon={snapIcons.global} active />
              <ColBtn icon={snapIcons.path} />
              <ColBtn icon={snapIcons.cross} />
              <ColBtn icon={snapIcons.smooth} active />
              <ColBtn icon={snapIcons.cusp} />
              <ColBtn icon={snapIcons.midpoint} />
              <ColSep className="h-[11px]" />
              <ColBtn icon={snapIcons.global} active />
              <ColBtn icon={snapIcons.corner} />
              <ColBtn icon={snapIcons.plus} />
              <ColBtn icon={snapIcons.text} />
              <ColSep className="h-[13px]" />
              <ColBtn icon={snapIcons.page} />
              <ColBtn icon={snapIcons.grid} active />
              <ColBtn icon={snapIcons.guide} active />
            </div>
          </div>
        </div>
      </div>

      {/* palette */}
      <div className="flex h-[19px] shrink-0 items-center border-y border-[#c9c7c4]">
        <div className="relative h-full w-[17px] shrink-0 bg-white">
          <svg viewBox="0 0 17 17" className="block h-full w-full">
            <path d="M1 0L16 17M16 0L1 17" stroke="#8a1c1c" strokeWidth="1.3" />
          </svg>
        </div>
        <div className="flex h-full w-[979px] shrink-0 overflow-hidden border-r border-[#b5b2ae]">
          {palette.map((c, i) => (
            <div key={i} className="h-full w-[16px] shrink-0" style={{ backgroundColor: c }} />
          ))}
        </div>
        <div className="flex flex-1 justify-center">
          <div className="h-0 w-0 border-y-[5px] border-r-[6px] border-y-transparent border-r-[#777]" />
        </div>
      </div>

      {/* palette scrollbar */}
      <div className="flex h-[13px] w-[996px] shrink-0 items-center rounded-[7px] border border-[#c2c0bd] bg-[#dcdbd9]">
        <div className="flex h-full w-[12px] items-center justify-center rounded-l-[7px] bg-[#f2f1f0]">
          <div className="h-0 w-0 border-y-[3.5px] border-r-[4px] border-y-transparent border-r-[#999]" />
        </div>
        <div className="flex h-full w-[139px] items-center justify-center rounded-[7px] border border-[#c2c0bd] bg-gradient-to-b from-[#fbfbfa] to-[#e9e8e6]">
          <Grip />
        </div>
        <div className="flex-1" />
        <div className="flex h-full w-[12px] items-center justify-center rounded-r-[7px] bg-[#f2f1f0]">
          <div className="h-0 w-0 border-y-[3.5px] border-l-[4px] border-y-transparent border-l-[#555]" />
        </div>
      </div>

      {/* status bar */}
      <footer className="flex h-[31px] shrink-0 items-center pt-[2px] text-[#3c3c3c]">
        <div className="flex w-[122px] shrink-0 flex-col pl-[2px] text-[12px] leading-[15px]">
          <div className="flex">
            <span className="w-[43px] text-[#55534f]">Fill:</span>
            <span className="ml-[26px] italic text-[#55534f]">None</span>
          </div>
          <div className="flex items-center">
            <span className="w-[43px] text-[#55534f]">Stroke:</span>
            <span className="h-[14px] w-[44px] bg-black" />
            <span className="ml-[3px] tracking-[0.4px] text-[#55534f]">0.265</span>
          </div>
        </div>
        <span className="ml-[4px] text-[12px] text-[#55534f]">O:</span>
        <NumInput value="0" className="ml-[2px] w-[45px]" />
        <div className="ml-[3px] h-[26px] w-px bg-[#c9c7c4]" />
        <div className="ml-[2px] flex h-full w-[24px] shrink-0 items-center justify-center">
          <svg width="14" height="12" viewBox="0 0 14 12" fill="none">
            <path d="M1 7c3-4 9-4 12 0c-3 4-9 4-12 0z" fill="#fff" stroke="#111" />
            <circle cx="7" cy="7" r="2.6" fill="#111" />
            <path d="M2 4L1 2M5 3V1M9 3V1M12 4l1-2" stroke="#111" />
          </svg>
        </div>
        <div className="ml-[1px] flex h-full w-[24px] shrink-0 items-center justify-center">
          <svg width="12" height="13" viewBox="0 0 12 13" fill="none">
            <path d="M3 5V3.5a2.5 2.5 0 0 1 5 0" stroke="#333" />
            <rect x="2" y="6" width="8" height="6" fill="#f4e7a0" stroke="#222" />
          </svg>
        </div>
        <div className="ml-[1px] flex h-[26px] w-[86px] shrink-0 items-center justify-between rounded-[4px] border border-[#b5b2ae] bg-[#f5f4f3] pl-[6px] pr-[3px] text-[12.5px] font-bold">
          •Layer 1
          <Spin />
        </div>
        <div className="ml-[2px] w-[536px] shrink-0 whitespace-nowrap text-[14.2px] text-[#55534f]">
          <b className="font-bold">2 of 2</b> nodes selected, angle: 0.00°. Drag to select nodes, click clear the selection
        </div>
        <div className="h-[26px] w-px bg-[#c9c7c4]" />
        <div className="ml-[3px] w-[67px] shrink-0 text-[12px] leading-[15px] tracking-[0.8px] text-[#55534f]">
          <div className="flex justify-between pr-[4px]">
            <span>X:</span>
            <span>185.95</span>
          </div>
          <div className="flex justify-between pr-[4px]">
            <span>Y:</span>
            <span>106.23</span>
          </div>
        </div>
        <span className="ml-[2px] text-[12px] text-[#55534f]">Z:</span>
        <NumInput value="126%" className="ml-[3px] w-[55px]" />
      </footer>
    </div>
  );
}
